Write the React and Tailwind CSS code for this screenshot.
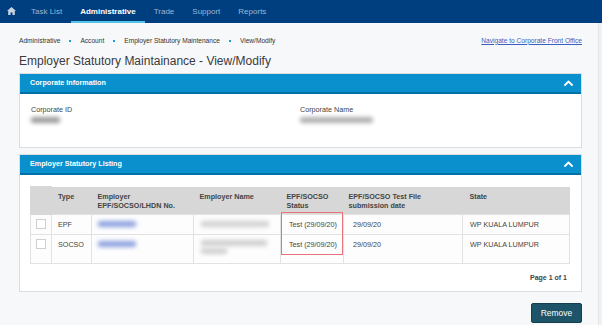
import React from "react";

const Chevron = () => (
  <svg width="9" height="6" viewBox="0 0 9 6" className="block">
    <polyline points="1,5 4.5,1.5 8,5" fill="none" stroke="#ffffff" strokeWidth="1.8" strokeLinecap="round" strokeLinejoin="round" />
  </svg>
);

const Home = () => (
  <svg width="9" height="8" viewBox="0 0 9 8" className="block">
    <path d="M4.5 0 L9 4 L7.8 4 L7.8 8 L5.5 8 L5.5 5.5 L3.5 5.5 L3.5 8 L1.2 8 L1.2 4 L0 4 Z" fill="#c9d4e3" />
  </svg>
);

const Blur = ({ w, color, h = "h-[6px]" }) => (
  <div className={`${w} ${h} ${color} rounded-[2px] blur-[2px]`} />
);

const PanelHeader = ({ title }) => (
  <div className="h-[20px] bg-[#0a90cd] border-b-2 border-[#0070a6] flex items-center justify-between pl-[10px] pr-[8px]">
    <span className="text-[7.2px] font-bold text-white leading-none">{title}</span>
    <Chevron />
  </div>
);

export default function App() {
  const navItems = ["Task List", "Administrative", "Trade", "Support", "Reports"];
  const crumbs = ["Administrative", "Account", "Employer Statutory Maintenance", "View/Modify"];
  return (
    <div className="w-[602px] h-[325px] overflow-hidden bg-[#f7f8fa] font-['Liberation_Sans',Arial,sans-serif] flex flex-col text-[#333]">
      <nav className="h-[23px] shrink-0 bg-[#003f7f] flex items-stretch">
        <div className="w-[22px] flex items-center justify-center pb-[1px]">
          <Home />
        </div>
        {navItems.map((n) => {
          const active = n === "Administrative";
          return (
            <div
              key={n}
              className={`px-[9px] flex items-center text-[8px] leading-none ${
                active ? "text-white font-bold border-b-2 border-[#55c4e8] pt-[2px]" : "text-[#9fb6d2]"
              }`}
            >
              {n}
            </div>
          );
        })}
      </nav>
      <div className="flex flex-1 min-h-0">
        <main className="flex-1 pl-[19px] pr-[16px] pt-[13px]">
          <div className="flex items-center justify-between h-[10px]">
            <div className="flex items-center text-[6.6px] leading-none text-[#333]">
              {crumbs.map((c, i) => (
                <React.Fragment key={c}>
                  {i > 0 && <span className="w-[2px] h-[2px] bg-[#1a9ad6] mx-[9px]" />}
                  <span>{c}</span>
                </React.Fragment>
              ))}
            </div>
            <a className="text-[6.6px] leading-none text-[#3b5fc0] underline">Navigate to Corporate Front Office</a>
          </div>
          <h1 className="mt-[7px] text-[12px] leading-[16px] text-[#3a3a3a]">
            Employer Statutory Maintainance - View/Modify
          </h1>

          <section className="mt-[4px] border border-[#dcdde0] bg-white">
            <PanelHeader title="Corporate Information" />
            <div className="h-[53px] grid grid-cols-[269px_1fr] pl-[11px] pt-[11px]">
              <div>
                <div className="text-[7.2px] leading-[9px] text-[#444]">Corporate ID</div>
                <div className="mt-[3px]"><Blur w="w-[29px]" color="bg-[#9a9a9a]" /></div>
              </div>
              <div>
                <div className="text-[7.2px] leading-[9px] text-[#444]">Corporate Name</div>
                <div className="mt-[3px]"><Blur w="w-[73px]" color="bg-[#b0b0b0]" /></div>
              </div>
            </div>
          </section>

          <section className="mt-[6px] border border-[#dcdde0] bg-white">
            <PanelHeader title="Employer Statutory Listing" />
            <div className="pl-[10px] pr-[11px] pt-[11px] pb-[9px]">
              <div className="relative">
                <table className="w-[539px] border-collapse table-fixed text-[7.2px] leading-[9px]">
                  <colgroup>
                    <col className="w-[21px]" />
                    <col className="w-[40px]" />
                    <col className="w-[102px]" />
                    <col className="w-[87px]" />
                    <col className="w-[63px]" />
                    <col className="w-[119px]" />
                    <col className="w-[107px]" />
                  </colgroup>
                  <thead>
                    <tr className="h-[28px] bg-[#d7d7d7] text-[#444] font-bold align-top text-left">
                      <th className="border border-[#d7d7d7]"></th>
                      <th className="pt-[5px] pl-[6px] font-bold">Type</th>
                      <th className="pt-[5px] pl-[6px] font-bold">Employer<br />EPF/SOCSO/LHDN No.</th>
                      <th className="pt-[5px] pl-[6px] font-bold">Employer Name</th>
                      <th className="pt-[5px] pl-[6px] font-bold">EPF/SOCSO<br />Status</th>
                      <th className="pt-[5px] pl-[5px] font-bold">EPF/SOCSO Test File<br />submission date</th>
                      <th className="pt-[5px] pl-[7px] font-bold border-r border-[#d7d7d7]">State</th>
                    </tr>
                  </thead>
                  <tbody className="text-[#444]">
                    <tr className="h-[20px] align-top bg-[#fdfdfd]">
                      <td className="border border-[#e2e2e2] pt-[5px] pl-[5px]">
                        <div className="w-[10px] h-[10px] border border-[#cfcfcf] bg-white -mt-[1px]" />
                      </td>
                      <td className="border border-[#e2e2e2] pt-[5px] pl-[6px]">EPF</td>
                      <td className="border border-[#e2e2e2] pt-[6px] pl-[6px]"><Blur w="w-[38px]" color="bg-[#8ea2e0]" /></td>
                      <td className="border border-[#e2e2e2] pt-[6px] pl-[7px]"><Blur w="w-[68px]" color="bg-[#d2d2d2]" /></td>
                      <td className="border border-[#e2e2e2] pt-[5px] pl-[8px]">Test (29/09/20)</td>
                      <td className="border border-[#e2e2e2] pt-[5px] pl-[9px]">29/09/20</td>
                      <td className="border border-[#e2e2e2] pt-[5px] pl-[7px]">WP KUALA LUMPUR</td>
                    </tr>
                    <tr className="h-[29px] align-top bg-[#fdfdfd]">
                      <td className="border border-[#e2e2e2] pt-[5px] pl-[5px]">
                        <div className="w-[10px] h-[10px] border border-[#cfcfcf] bg-white -mt-[1px]" />
                      </td>
                      <td className="border border-[#e2e2e2] pt-[5px] pl-[6px]">SOCSO</td>
                      <td className="border border-[#e2e2e2] pt-[6px] pl-[6px]"><Blur w="w-[38px]" color="bg-[#8ea2e0]" /></td>
                      <td className="border border-[#e2e2e2] pt-[5px] pl-[7px]">
                        <Blur w="w-[66px]" color="bg-[#cfcfcf]" />
                        <div className="mt-[2px]"><Blur w="w-[26px]" color="bg-[#cfcfcf]" /></div>
                      </td>
                      <td className="border border-[#e2e2e2] pt-[5px] pl-[8px]">Test (29/09/20)</td>
                      <td className="border border-[#e2e2e2] pt-[5px] pl-[9px]">29/09/20</td>
                      <td className="border border-[#e2e2e2] pt-[5px] pl-[7px]">WP KUALA LUMPUR</td>
                    </tr>
                  </tbody>
                </table>
                <div className="absolute left-[251px] top-[26px] w-[62px] h-[43px] border border-[#e8737c] pointer-events-none" />
              </div>
              <div className="mt-[9px] pr-[3px] text-right text-[7px] leading-[9px] font-bold text-[#444]">Page 1 of 1</div>
            </div>
          </section>

          <div className="mt-[11px] flex justify-end">
            <button className="w-[51px] h-[20px] bg-[#1d5468] border border-[#163f4e] rounded-[2px] text-white text-[8.5px] leading-none">
              Remove
            </button>
          </div>
        </main>
        <div className="w-[5px] border-l border-[#e2e4e8] bg-[#f0f1f3]" />
      </div>
    </div>
  );
}
